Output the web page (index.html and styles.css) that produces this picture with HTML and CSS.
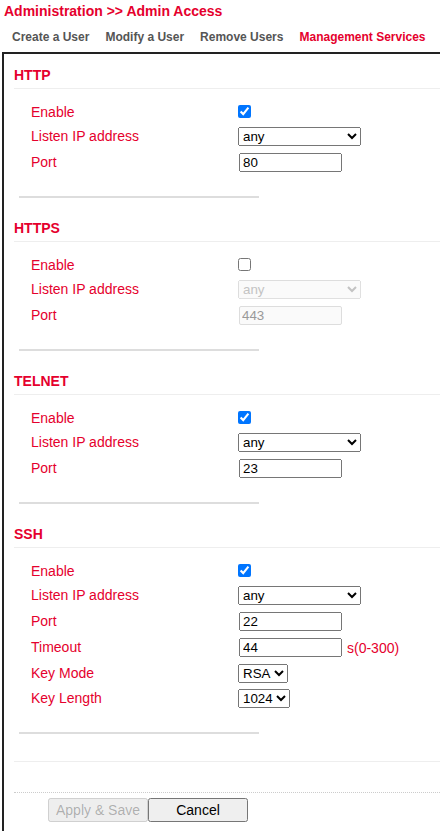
FILE: index.html
```html
<!DOCTYPE html>
<html>
<head>
<meta charset="utf-8">
<link rel="stylesheet" href="styles.css">
</head>
<body>
<div class="title">Administration &gt;&gt; Admin Access</div>
<div class="tabs">
  <span class="tab">Create a User</span>
  <span class="tab">Modify a User</span>
  <span class="tab">Remove Users</span>
  <span class="tab active">Management Services</span>
</div>
<div class="panel">
  <section class="sec">
    <div class="sec-head">HTTP</div>
    <div class="rows">
      <div class="row h24"><span class="lbl">Enable</span><input class="chk" type="checkbox" checked></div>
      <div class="row h25"><span class="lbl">Listen IP address</span><select class="sel"><option>any</option></select></div>
      <div class="row h26"><span class="lbl">Port</span><input class="txt" type="text" value="80"></div>
    </div>
    <div class="sep"></div>
  </section>
  <section class="sec">
    <div class="sec-head">HTTPS</div>
    <div class="rows">
      <div class="row h24"><span class="lbl">Enable</span><input class="chk" type="checkbox"></div>
      <div class="row h25"><span class="lbl">Listen IP address</span><select class="sel" disabled><option>any</option></select></div>
      <div class="row h26"><span class="lbl">Port</span><input class="txt" type="text" value="443" disabled></div>
    </div>
    <div class="sep"></div>
  </section>
  <section class="sec">
    <div class="sec-head">TELNET</div>
    <div class="rows">
      <div class="row h24"><span class="lbl">Enable</span><input class="chk" type="checkbox" checked></div>
      <div class="row h25"><span class="lbl">Listen IP address</span><select class="sel"><option>any</option></select></div>
      <div class="row h26"><span class="lbl">Port</span><input class="txt" type="text" value="23"></div>
    </div>
    <div class="sep"></div>
  </section>
  <section class="sec">
    <div class="sec-head">SSH</div>
    <div class="rows">
      <div class="row h24"><span class="lbl">Enable</span><input class="chk" type="checkbox" checked></div>
      <div class="row h25"><span class="lbl">Listen IP address</span><select class="sel"><option>any</option></select></div>
      <div class="row h26"><span class="lbl">Port</span><input class="txt" type="text" value="22"></div>
      <div class="row h27"><span class="lbl">Timeout</span><input class="txt" type="text" value="44"><span class="unit">s(0-300)</span></div>
      <div class="row h25"><span class="lbl">Key Mode</span><select class="sel-auto"><option>RSA</option></select></div>
      <div class="row h25"><span class="lbl">Key Length</span><select class="sel-auto"><option>1024</option></select></div>
    </div>
    <div class="sep"></div>
  </section>
  <div class="hline"></div>
  <div class="actions">
    <button class="btn" disabled>Apply &amp; Save</button><button class="btn">Cancel</button>
  </div>
</div>
</body>
</html>
```
FILE: styles.css
```css
html, body {
  margin: 0;
  padding: 0;
  background: #fff;
  overflow: hidden;
}
body {
  font-family: "Liberation Sans", Arial, sans-serif;
  color: #e5002d;
}
.title {
  height: 22px;
  line-height: 22px;
  padding-left: 4px;
  font-size: 14px;
  font-weight: bold;
  color: #e5002d;
  white-space: nowrap;
}
.tabs {
  height: 30px;
  line-height: 30px;
  padding-left: 4px;
  display: flex;
  white-space: nowrap;
}
.tab {
  padding: 0 8px;
  font-size: 12px;
  font-weight: bold;
  color: #555;
}
.tab.active {
  color: #e5002d;
}
.panel {
  margin-left: 2px;
  border-top: 2px solid #222;
  border-left: 2px solid #222;
  padding: 8px 0 9px 10px;
}
.sec-head {
  line-height: 26px;
  font-size: 14px;
  font-weight: bold;
  color: #e5002d;
  border-bottom: 1px solid #eee;
}
.rows {
  padding-top: 11px;
}
.row {
  display: flex;
  align-items: center;
  font-size: 14px;
}
.h24 { height: 24px; }
.h25 { height: 25px; }
.h26 { height: 26px; }
.h27 { height: 27px; }
.lbl {
  flex: 0 0 207px;
  padding-left: 17px;
  margin-bottom: 1px;
  color: #e5002d;
}
.chk {
  margin: 0 0 2px 0;
  width: 13px;
  height: 13px;
}
.sel {
  width: 123px;
  height: 19px;
  margin: 0;
  color: #000;
  font-family: "Liberation Sans", Arial, sans-serif;
  font-size: 13.333px;
}
.sel-auto {
  height: 19px;
  margin: 0;
  color: #000;
  font-family: "Liberation Sans", Arial, sans-serif;
  font-size: 13.333px;
}
.txt {
  box-sizing: border-box;
  width: 103px;
  height: 19px;
  margin: 0 0 0 1px;
  padding: 1px 2px;
  color: #000;
  font-family: "Liberation Sans", Arial, sans-serif;
  font-size: 13.333px;
}
.txt:disabled {
  background: #fafafa;
  border: 1px solid #ddd;
  border-radius: 2px;
  color: #999;
}
.sel:disabled {
  color: #aaa;
}
.unit {
  margin-left: 5px;
  color: #e5002d;
}
.sep {
  margin: 21px 0 17px 5px;
  width: 240px;
  height: 2px;
  background: #ddd;
}
.hline {
  margin-top: 27px;
  height: 1px;
  background: #eee;
}
.actions {
  margin-top: 30px;
  border-top: 1px dotted #ccc;
  padding: 5px 0 0 34px;
  display: flex;
}
.btn {
  box-sizing: border-box;
  width: 100px;
  height: 24px;
  margin: 0;
  padding: 0;
  white-space: nowrap;
  font-family: "Liberation Sans", Arial, sans-serif;
  font-size: 14px;
}
```
